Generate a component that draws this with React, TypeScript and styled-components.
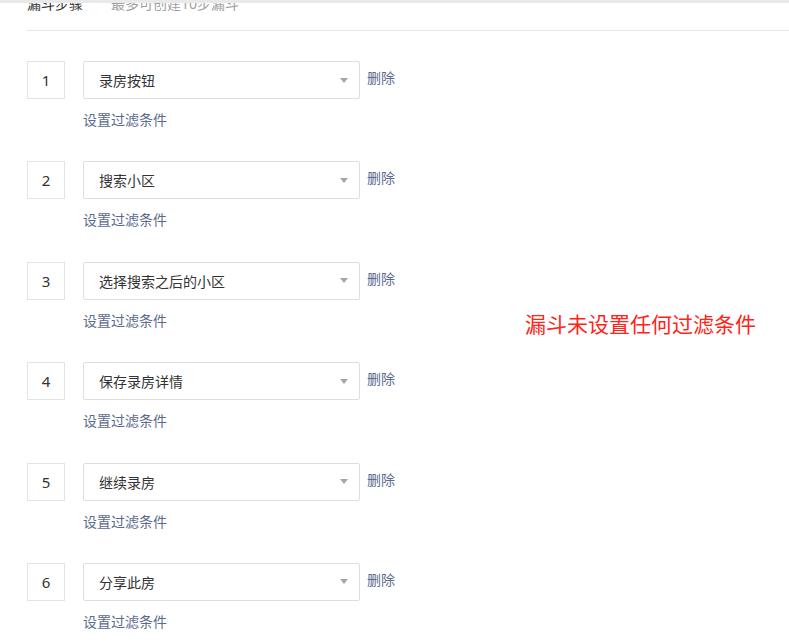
import styled, { createGlobalStyle } from "styled-components";

const steps = ["录房按钮", "搜索小区", "选择搜索之后的小区", "保存录房详情", "继续录房", "分享此房"];

const GlobalStyle = createGlobalStyle`
  html, body {
    margin: 0;
    padding: 0;
    background: #fff;
    overflow: hidden;
    font-family: "Noto Sans", "Noto Sans CJK SC", sans-serif;
  }
`;

export default function App() {
  return (
    <>
      <GlobalStyle />
      <TopBar />
      <Page>
        <Header>
          <Title>漏斗步骤</Title>
          <Hint>最多可创建10步漏斗</Hint>
        </Header>
        <Body>
          <StepList>
            {steps.map((name, i) => (
              <Step key={name}>
                <StepLine>
                  <IndexBox>{i + 1}</IndexBox>
                  <Select>
                    <span>{name}</span>
                    <Caret />
                  </Select>
                  <TextLink>删除</TextLink>
                </StepLine>
                <FilterLink>设置过滤条件</FilterLink>
              </Step>
            ))}
          </StepList>
          <Note>漏斗未设置任何过滤条件</Note>
        </Body>
      </Page>
    </>
  );
}

const TopBar = styled.div`
  position: relative;
  z-index: 1;
  height: 3px;
  background: #e9e9e9;
`;

const Page = styled.div`
  margin-top: -10px;
  padding-left: 27px;
`;

const Header = styled.div`
  display: flex;
  align-items: center;
  height: 20px;
  padding-bottom: 17px;
  border-bottom: 1px solid #e8e8e8;
`;

const Title = styled.span`
  font-size: 14px;
  color: #333;
  margin-right: 28px;
`;

const Hint = styled.span`
  font-size: 14px;
  color: #a0a0a0;
`;

const Body = styled.div`
  display: flex;
`;

const StepList = styled.div`
  display: flex;
  flex-direction: column;
  padding-top: 30px;
  width: 400px;
`;

const Step = styled.div`
  height: 100.4px;
  display: flex;
  flex-direction: column;
`;

const StepLine = styled.div`
  display: flex;
  align-items: flex-start;
  height: 38px;
`;

const IndexBox = styled.div`
  box-sizing: border-box;
  width: 38px;
  height: 38px;
  border: 1px solid #e3e3e3;
  display: flex;
  align-items: center;
  justify-content: center;
  font-size: 15px;
  color: #333;
  margin-right: 18px;
`;

const Select = styled.div`
  box-sizing: border-box;
  width: 277px;
  height: 38px;
  border: 1px solid #dedede;
  border-radius: 2px;
  display: flex;
  align-items: center;
  justify-content: space-between;
  padding: 0 11px 0 15px;
  font-size: 14px;
  color: #333;
`;

const Caret = styled.span`
  width: 0;
  height: 0;
  border-left: 4px solid transparent;
  border-right: 4px solid transparent;
  border-top: 5px solid #a6a6a6;
`;

const TextLink = styled.span`
  margin-left: 7px;
  line-height: 33px;
  font-size: 14px;
  color: #5b6a8e;
`;

const FilterLink = styled.span`
  margin: 11px 0 0 56px;
  line-height: 20px;
  font-size: 14px;
  color: #5b6a8e;
`;

const Note = styled.div`
  padding: 281px 0 0 98px;
  font-size: 21px;
  line-height: 24px;
  color: #ff2318;
  white-space: nowrap;
`;
